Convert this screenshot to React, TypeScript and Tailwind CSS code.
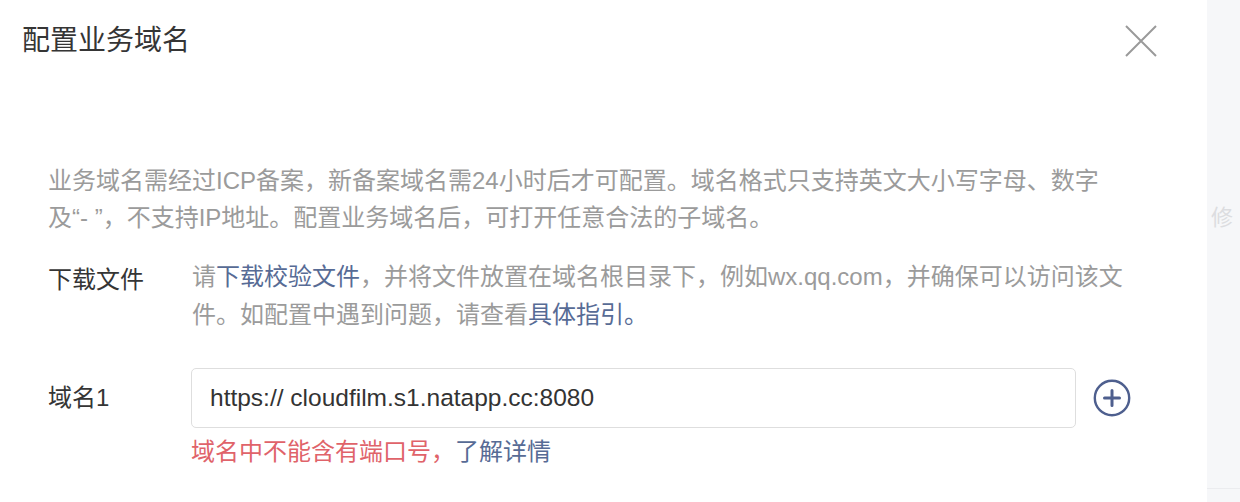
import React from 'react';

const font = { fontFamily: '"Liberation Sans", "Noto Sans CJK SC", sans-serif' };

const CloseIcon = () => (
  <svg width="32" height="32" viewBox="0 0 32 32" fill="none">
    <path d="M1 1L31 31M31 1L1 31" stroke="#9a9a9a" strokeWidth="2" />
  </svg>
);

const PlusCircle = () => (
  <svg width="38" height="38" viewBox="0 0 38 38" fill="none">
    <circle cx="19" cy="19" r="17.2" stroke="#4e5f8e" strokeWidth="2.4" />
    <path d="M19 11.5V26.5M11.5 19H26.5" stroke="#4e5f8e" strokeWidth="3" strokeLinecap="round" />
  </svg>
);

export default function App() {
  return (
    <div className="flex w-[1240px] h-[502px] overflow-hidden bg-white" style={font}>
      {/* Dialog panel */}
      <div className="w-[1207px] shrink-0 flex flex-col bg-white">
        <div className="flex items-center justify-between h-[82px] pl-[22px] pr-[50px]">
          <h2 className="text-[28px] leading-[36px] text-[#353535] font-normal">配置业务域名</h2>
          <button className="w-[32px] h-[32px] flex items-center justify-center">
            <CloseIcon />
          </button>
        </div>

        <div className="flex flex-col pl-[48px] pt-[80px]">
          <p className="text-[24px] leading-[37px] text-[#9b9b9b] whitespace-nowrap">
            业务域名需经过ICP备案，新备案域名需24小时后才可配置。域名格式只支持英文大小写字母、数字
            <br />
            及“- ”，不支持IP地址。配置业务域名后，可打开任意合法的子域名。
          </p>

          <div className="flex mt-[22px]">
            <div className="w-[144px] shrink-0 text-[24px] leading-[38px] text-[#353535] pt-[3px]">下载文件</div>
            <p className="text-[24px] leading-[38px] text-[#9b9b9b] whitespace-nowrap">
              请<span className="text-[#576b95]">下载校验文件</span>，并将文件放置在域名根目录下，例如wx.qq.com，并确保可以访问该文
              <br />
              件。如配置中遇到问题，请查看<span className="text-[#576b95]">具体指引。</span>
            </p>
          </div>

          <div className="flex mt-[34px]">
            <div className="w-[143px] shrink-0 h-[60px] flex items-center text-[24px] text-[#353535]">域名1</div>
            <div className="flex flex-col">
              <div className="flex items-center">
                <div className="w-[885px] h-[60px] flex items-center px-[18px] border border-[#dedede] rounded-[5px] text-[24.5px] text-[#333333]">
                  https:// cloudfilm.s1.natapp.cc:8080
                </div>
                <div className="ml-[17px] flex items-center">
                  <PlusCircle />
                </div>
              </div>
              <p className="mt-[5px] text-[24px] leading-[37px] text-[#e0636a]">
                域名中不能含有端口号，<span className="text-[#576b95]">了解详情</span>
              </p>
            </div>
          </div>
        </div>
      </div>

      {/* Page behind the dialog */}
      <div className="flex-1 flex flex-col bg-[#f6f7f9]">
        <div className="h-[205px]" />
        <div className="ml-[4px] text-[22px] leading-[26px] text-[#dcdde0]">修</div>
        <div className="mt-[257px] border-t border-[#ebecef]" />
      </div>
    </div>
  );
}
